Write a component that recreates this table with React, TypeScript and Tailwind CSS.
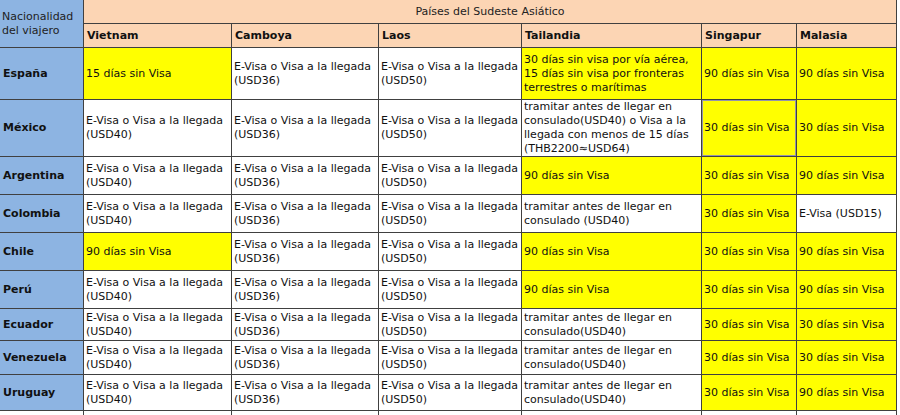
import React from "react";

type Cell = { lines: string[]; y?: boolean; sel?: boolean };

const ev = (usd: string): Cell => ({ lines: ["E-Visa o Visa a la llegada", `(${usd})`] });
const y = (t: string): Cell => ({ lines: [t], y: true });
const tram = (sp: boolean): Cell => ({
  lines: ["tramitar antes de llegar en", sp ? "consulado (USD40)" : "consulado(USD40)"],
});

const rows: { name: string; h: string; cells: Cell[] }[] = [
  {
    name: "España",
    h: "h-[52px]",
    cells: [
      y("15 días sin Visa"),
      ev("USD36"),
      ev("USD50"),
      {
        lines: ["30 días sin visa por vía aérea,", "15 días sin visa por fronteras", "terrestres o marítimas"],
        y: true,
      },
      y("90 días sin Visa"),
      y("90 días sin Visa"),
    ],
  },
  {
    name: "México",
    h: "h-[57px]",
    cells: [
      ev("USD40"),
      ev("USD36"),
      ev("USD50"),
      {
        lines: [
          "tramitar antes de llegar en",
          "consulado(USD40) o Visa a la",
          "llegada con menos de 15 días",
          "(THB2200≈USD64)",
        ],
      },
      { lines: ["30 días sin Visa"], y: true, sel: true },
      y("30 días sin Visa"),
    ],
  },
  {
    name: "Argentina",
    h: "h-[38px]",
    cells: [ev("USD40"), ev("USD36"), ev("USD50"), y("90 días sin Visa"), y("30 días sin Visa"), y("90 días sin Visa")],
  },
  {
    name: "Colombia",
    h: "h-[38px]",
    cells: [ev("USD40"), ev("USD36"), ev("USD50"), tram(true), y("30 días sin Visa"), { lines: ["E-Visa (USD15)"] }],
  },
  {
    name: "Chile",
    h: "h-[38px]",
    cells: [y("90 días sin Visa"), ev("USD36"), ev("USD50"), y("90 días sin Visa"), y("30 días sin Visa"), y("90 días sin Visa")],
  },
  {
    name: "Perú",
    h: "h-[38px]",
    cells: [ev("USD40"), ev("USD36"), ev("USD50"), y("90 días sin Visa"), y("30 días sin Visa"), y("90 días sin Visa")],
  },
  {
    name: "Ecuador",
    h: "h-[32px]",
    cells: [ev("USD40"), ev("USD36"), ev("USD50"), tram(false), y("30 días sin Visa"), y("30 días sin Visa")],
  },
  {
    name: "Venezuela",
    h: "h-[34px]",
    cells: [ev("USD40"), ev("USD36"), ev("USD50"), tram(false), y("30 días sin Visa"), y("30 días sin Visa")],
  },
  {
    name: "Uruguay",
    h: "h-[36px]",
    cells: [ev("USD40"), ev("USD36"), ev("USD50"), tram(false), y("30 días sin Visa"), y("90 días sin Visa")],
  },
];

const cols = ["Vietnam", "Camboya", "Laos", "Tailandia", "Singapur", "Malasia"];

const bd = "border-r border-b border-[#404040]";

export default function App() {
  return (
    <div className="w-[900px] h-[415px] overflow-hidden bg-white font-['DejaVu_Sans',sans-serif] text-[11px] leading-[14px] text-[#111]">
      <div className="grid w-[897px] grid-cols-[84px_148px_147px_143px_180px_95px_100px] grid-rows-[24px_24px]">
        <div className={`row-span-2 bg-[#8db4e2] ${bd} flex flex-col justify-center pl-[2px] text-[#222]`}>
          <span>Nacionalidad</span>
          <span>del viajero</span>
        </div>
        <div className={`col-span-6 bg-[#fcd5b4] ${bd} flex items-center justify-center text-[#222]`}>
          Países del Sudeste Asiático
        </div>
        {cols.map((c) => (
          <div key={c} className={`bg-[#fcd5b4] ${bd} flex items-center pl-[3px] font-bold`}>
            {c}
          </div>
        ))}
        {rows.map((r) => (
          <React.Fragment key={r.name}>
            <div className={`${r.h} bg-[#8db4e2] ${bd} flex items-center pl-[3px] font-bold`}>{r.name}</div>
            {r.cells.map((c, i) => (
              <div
                key={i}
                className={`${r.h} relative ${c.y ? "bg-[#ffff00]" : "bg-white"} ${bd} flex flex-col justify-center pl-[2px] overflow-hidden`}
              >
                {c.lines.map((l, j) => (
                  <span key={j} className="whitespace-nowrap">
                    {l}
                  </span>
                ))}
                {c.sel && (
                  <div className="absolute -top-px -left-px right-[-1px] bottom-[-1px] border-2 border-[#9494ac]" />
                )}
              </div>
            ))}
          </React.Fragment>
        ))}
        <div className={`h-[20px] bg-white ${bd}`} />
        {cols.map((c) => (
          <div key={c} className={`h-[20px] bg-white ${bd}`} />
        ))}
      </div>
    </div>
  );
}
